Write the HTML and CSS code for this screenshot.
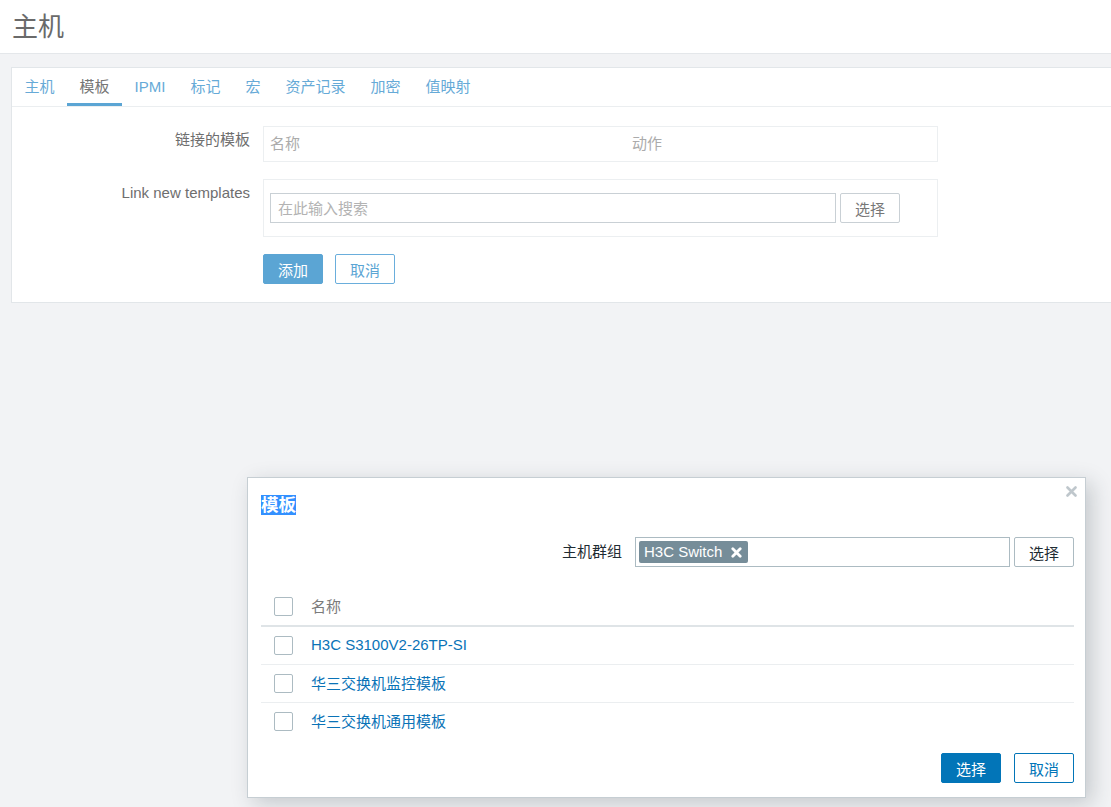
FILE: index.html
```html
<!DOCTYPE html>
<html lang="zh-CN">
<head>
<meta charset="utf-8">
<title>主机</title>
<link rel="stylesheet" href="styles.css">
</head>
<body>
<header class="page-header">
  <h1>主机</h1>
</header>
<main class="main">
  <section class="card">
    <ul class="tabs">
      <li class="tab">主机</li>
      <li class="tab active">模板</li>
      <li class="tab">IPMI</li>
      <li class="tab">标记</li>
      <li class="tab">宏</li>
      <li class="tab">资产记录</li>
      <li class="tab">加密</li>
      <li class="tab">值映射</li>
    </ul>
    <div class="form">
      <div class="label">链接的模板</div>
      <div class="linked">
        <span>名称</span>
        <span>动作</span>
      </div>
      <div class="label">Link new templates</div>
      <div class="newbox">
        <input class="search" type="text" placeholder="在此输入搜索">
        <button class="btn-plain">选择</button>
      </div>
      <div></div>
      <div class="actions">
        <button class="btn-add">添加</button>
        <button class="btn-cancel">取消</button>
      </div>
    </div>
  </section>
</main>

<div class="dialog">
  <button class="close" aria-label="close">
    <svg width="11" height="11" viewBox="0 0 11 11"><path d="M1.5 1.5 L9.5 9.5 M9.5 1.5 L1.5 9.5" stroke="#bfc7cc" stroke-width="2.6" stroke-linecap="round"/></svg>
  </button>
  <h4 class="dlg-title"><span class="sel">模板</span></h4>
  <div class="ms-row">
    <span class="ms-label">主机群组</span>
    <div class="multiselect">
      <span class="tag">H3C Switch
        <svg width="11" height="11" viewBox="0 0 11 11"><path d="M1.8 1.8 L9.2 9.2 M9.2 1.8 L1.8 9.2" stroke="#fff" stroke-width="2.8" stroke-linecap="round"/></svg>
      </span>
    </div>
    <button class="dlg-btn">选择</button>
  </div>
  <div class="table">
    <div class="thead"><span class="cb"></span><span>名称</span></div>
    <div class="row"><span class="cb"></span><a class="link">H3C S3100V2-26TP-SI</a></div>
    <div class="row"><span class="cb"></span><a class="link">华三交换机监控模板</a></div>
    <div class="row last"><span class="cb"></span><a class="link">华三交换机通用模板</a></div>
  </div>
  <div class="dlg-footer">
    <button class="btn-primary">选择</button>
    <button class="btn-outline">取消</button>
  </div>
</div>
</body>
</html>
```
FILE: styles.css
```css
html, body {
  margin: 0;
  padding: 0;
}
body {
  background: #f2f3f5;
  font-family: "Liberation Sans", "Noto Sans CJK SC", sans-serif;
  font-size: 15px;
  width: 1111px;
  height: 807px;
  overflow: hidden;
  position: relative;
}
button, input {
  font-family: inherit;
  font-size: 15px;
}

.page-header {
  background: #fff;
  height: 53px;
  border-bottom: 1px solid #e4e7ea;
  padding-left: 12px;
  display: flex;
  align-items: center;
}
.page-header h1 {
  margin: 0;
  font-size: 26px;
  font-weight: normal;
  color: #6a6a6a;
  line-height: 30px;
}

.main {
  padding: 13px 0 0 11px;
}
.card {
  background: #fff;
  border: 1px solid #e2e6e9;
  margin-right: -20px;
}
.tabs {
  display: flex;
  list-style: none;
  margin: 0;
  padding: 0;
  height: 38px;
  border-bottom: 1px solid #ebeef0;
}
.tab {
  padding: 0 12.5px;
  line-height: 38px;
  color: #66aad7;
}
.tab.active {
  color: #767676;
  box-shadow: inset 0 -3px #5ba5d4;
}

.form {
  display: grid;
  grid-template-columns: 238px 675px;
  column-gap: 13px;
  row-gap: 17px;
  padding: 19px 0 18px 0;
}
.label {
  text-align: right;
  color: #6e6e6e;
  padding-top: 5px;
  line-height: 18px;
}
.linked {
  box-sizing: border-box;
  height: 36px;
  border: 1px solid #eceff1;
  display: grid;
  grid-template-columns: 362px 1fr;
  align-items: center;
  padding: 0 0 3px 6px;
  color: #ababab;
}
.newbox {
  border: 1px solid #eceff1;
  padding: 13px 6px;
  display: flex;
  gap: 4px;
}
.search {
  box-sizing: border-box;
  width: 566px;
  height: 30px;
  border: 1px solid #c9d0d5;
  padding: 0 7px;
  color: #555;
  outline: none;
}
.search::placeholder {
  color: #b3b3b3;
}
.btn-plain {
  box-sizing: border-box;
  width: 60px;
  height: 30px;
  background: #fff;
  border: 1px solid #c9d0d5;
  border-radius: 2px;
  color: #777;
  padding: 0;
}
.actions {
  display: flex;
  gap: 12px;
}
.btn-add, .btn-cancel {
  box-sizing: border-box;
  width: 60px;
  height: 30px;
  border-radius: 2px;
  padding: 0;
}
.btn-add {
  background: #5ba5d4;
  border: 1px solid #5ba5d4;
  color: #fff;
}
.btn-cancel {
  background: #fff;
  border: 1px solid #6aaedc;
  color: #5ba5d4;
}

/* Modal dialog over the page */
.dialog {
  position: absolute;
  left: 247px;
  top: 477px;
  width: 839px;
  box-sizing: border-box;
  background: #fff;
  border: 1px solid #c6ced3;
  box-shadow: 6px 6px 20px rgba(40, 55, 65, 0.22);
  padding: 16px 11px 14px 13px;
  color: #1f2c33;
}
.close {
  position: absolute;
  top: 8px;
  right: 8px;
  background: none;
  border: none;
  padding: 0;
  width: 11px;
  height: 11px;
  display: flex;
}
.dlg-title {
  margin: 0;
  font-size: 17.5px;
  font-weight: bold;
  line-height: 22px;
}
.sel {
  background: #3390ff;
  color: #fff;
}
.ms-row {
  display: flex;
  justify-content: flex-end;
  align-items: center;
  margin-top: 21px;
}
.ms-label {
  margin-right: 13px;
  padding-bottom: 3px;
  color: #1f2c33;
}
.multiselect {
  box-sizing: border-box;
  width: 375px;
  height: 30px;
  border: 1px solid #acbbc2;
  padding: 3px;
  display: flex;
  align-items: center;
}
.tag {
  display: flex;
  align-items: center;
  gap: 9px;
  height: 22px;
  line-height: 22px;
  padding: 0 6px 0 5px;
  background: #768d99;
  color: #fff;
  border-radius: 2px;
}
.dlg-btn {
  box-sizing: border-box;
  margin-left: 4px;
  width: 60px;
  height: 30px;
  background: #fff;
  border: 1px solid #acbbc2;
  border-radius: 2px;
  color: #1f2c33;
  padding: 0;
}
.table {
  margin-top: 21px;
}
.thead, .row {
  display: flex;
  align-items: center;
  gap: 18px;
  padding-left: 13px;
  box-sizing: border-box;
}
.thead {
  height: 39px;
  border-bottom: 2px solid #dfe4e7;
  color: #7b7b7b;
}
.thead span:last-child, .link {
  padding-bottom: 2px;
}
.row {
  height: 38px;
  border-bottom: 1px solid #ebeef0;
}
.row.last {
  height: 37px;
  border-bottom: none;
}
.cb {
  box-sizing: border-box;
  width: 19px;
  height: 19px;
  border: 1px solid #acbbc2;
  border-radius: 2px;
  background: #fff;
}
.link {
  color: #0a73b7;
  text-decoration: none;
}
.dlg-footer {
  display: flex;
  justify-content: flex-end;
  gap: 13px;
  margin-top: 13px;
}
.btn-primary, .btn-outline {
  box-sizing: border-box;
  width: 60px;
  height: 30px;
  border-radius: 2px;
  padding: 0;
}
.btn-primary {
  background: #0275b8;
  border: 1px solid #0275b8;
  color: #fff;
}
.btn-outline {
  background: #fff;
  border: 1px solid #0275b8;
  color: #0275b8;
}
```
